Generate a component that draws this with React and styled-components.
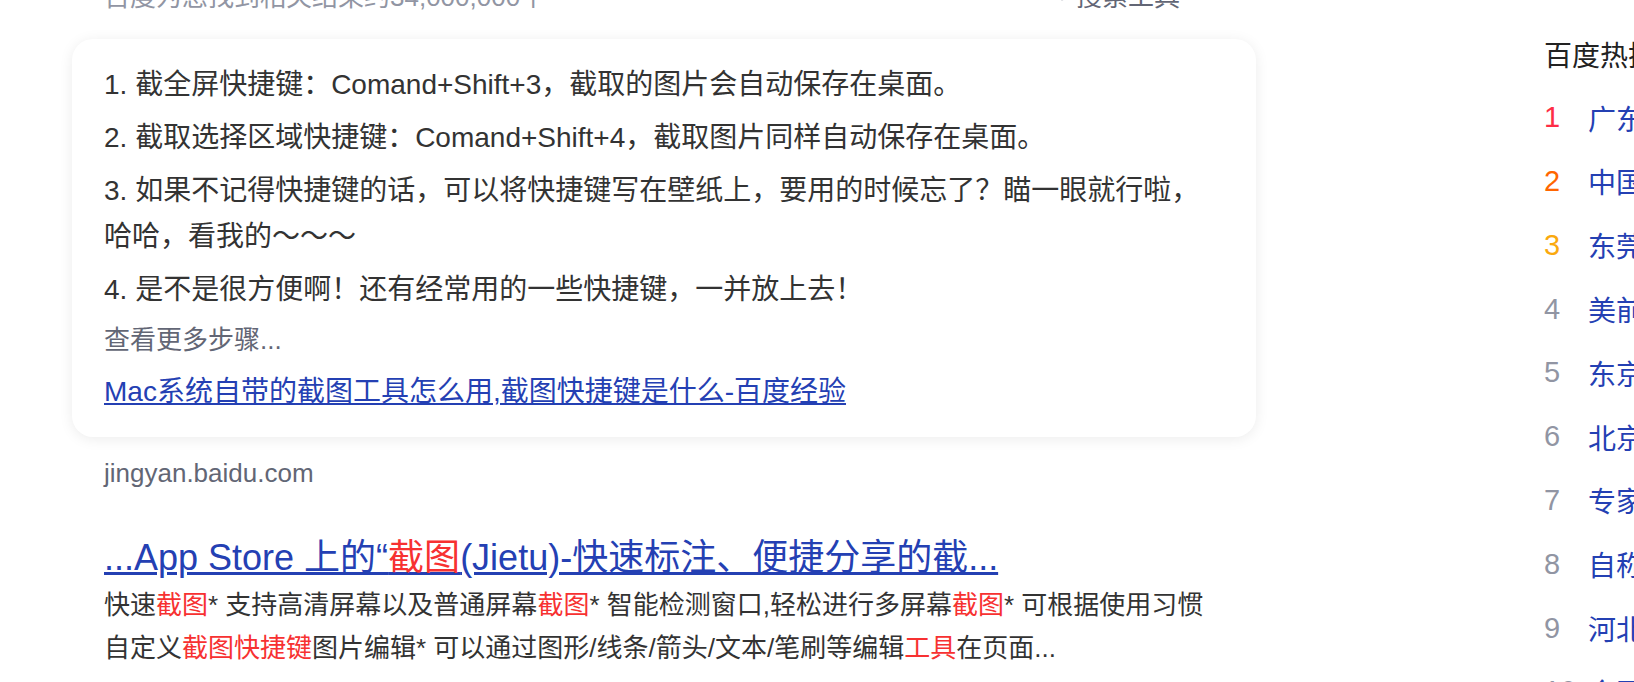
import React from 'react';
import styled, { createGlobalStyle } from 'styled-components';

const GlobalStyle = createGlobalStyle`
  html, body { margin: 0; padding: 0; background: #fff; overflow: hidden; }
  body { font-family: "Liberation Sans", "Noto Sans CJK SC", sans-serif; }
  * { box-sizing: border-box; }
`;

const Page = styled.div`
  display: flex;
  align-items: flex-start;
  width: 1634px;
  height: 682px;
  overflow: hidden;
  padding-left: 104px;
`;

const Main = styled.div`
  flex: none;
  width: 1120px;
  margin-top: -24px;
`;

const ResultMeta = styled.div`
  display: flex;
  justify-content: space-between;
  align-items: center;
  height: 36px;
  padding-right: 44px;
  font-size: 26px;
  color: #9195a3;
  white-space: nowrap;
`;

const Tools = styled.span`
  display: inline-flex;
  align-items: center;
  gap: 6px;
  color: #626675;
`;

const Card = styled.div`
  margin: 27px -32px 0;
  padding: 23px 32px 22px;
  background: #fff;
  border-radius: 21px;
  box-shadow: 0 2px 14px rgba(0, 0, 0, 0.08);
`;

const Step = styled.p`
  margin: 0 0 7px;
  font-size: 28px;
  line-height: 46px;
  color: #333;
`;

const More = styled.div`
  margin: 0 0 9px;
  font-size: 26px;
  line-height: 40px;
  color: #626675;
`;

const CardLink = styled.a`
  display: block;
  font-size: 28px;
  line-height: 46px;
  color: #2440b3;
  text-decoration: underline;
  cursor: pointer;
`;

const Source = styled.div`
  margin-top: 18px;
  font-size: 26px;
  line-height: 36px;
  color: #626675;
`;

const Title = styled.a`
  display: block;
  margin-top: 42px;
  font-size: 36px;
  line-height: 50px;
  color: #2440b3;
  text-decoration: underline;
  white-space: nowrap;
  cursor: pointer;
`;

const Hl = styled.em`
  font-style: normal;
  color: #f73131;
`;

const Abstract = styled.p`
  margin: 1px 0 0;
  font-size: 26px;
  line-height: 42.5px;
  color: #333;
`;

const Side = styled.aside`
  flex: none;
  width: 600px;
  margin-left: 320px;
  padding-top: 37px;
`;

const SideTitle = styled.div`
  font-size: 28px;
  line-height: 40px;
  color: #222;
  margin-bottom: 8.8px;
`;

const HotRow = styled.div`
  display: flex;
  align-items: center;
  height: 63.8px;
  white-space: nowrap;
`;

const rankColors = ['#fe2d46', '#ff6600', '#faa90e'];

const Rank = styled.span`
  flex: none;
  width: 44px;
  font-size: 29px;
  color: ${(p) => rankColors[p.$rank - 1] || '#9195a3'};
`;

const HotText = styled.a`
  font-size: 28px;
  color: #2440b3;
  cursor: pointer;
`;

const Funnel = () => (
  <svg width="14" height="16" viewBox="0 0 14 16" aria-hidden="true">
    <path d="M1 2h12l-4.5 6v5.5L5.5 15V8z" fill="#c4c7ce" />
  </svg>
);

const hot = [
  '广东发布最新天气预警',
  '中国航天再创新纪录',
  '东莞多地开展主题活动',
  '美前总统发表公开讲话',
  '东京街头出现新变化',
  '北京今年首场降雪',
  '专家解读最新政策',
  '自称网红男子被调查',
  '河北多地迎来降温',
  '全国报名人数公布',
];

export default function App() {
  return (
    <>
      <GlobalStyle />
      <Page>
        <Main>
          <ResultMeta>
            <span>百度为您找到相关结果约34,000,000个</span>
            <Tools>
              <Funnel />
              搜索工具
            </Tools>
          </ResultMeta>
          <Card>
            <Step>1. 截全屏快捷键：Comand+Shift+3，截取的图片会自动保存在桌面。</Step>
            <Step>2. 截取选择区域快捷键：Comand+Shift+4，截取图片同样自动保存在桌面。</Step>
            <Step>3. 如果不记得快捷键的话，可以将快捷键写在壁纸上，要用的时候忘了？瞄一眼就行啦，哈哈，看我的～～～</Step>
            <Step>4. 是不是很方便啊！还有经常用的一些快捷键，一并放上去！</Step>
            <More>查看更多步骤...</More>
            <CardLink>Mac系统自带的截图工具怎么用,截图快捷键是什么-百度经验</CardLink>
          </Card>
          <Source>jingyan.baidu.com</Source>
          <Title>
            ...App Store 上的“<Hl>截图</Hl>(Jietu)-快速标注、便捷分享的截...
          </Title>
          <Abstract>
            快速<Hl>截图</Hl>* 支持高清屏幕以及普通屏幕<Hl>截图</Hl>* 智能检测窗口,轻松进行多屏幕<Hl>截图</Hl>* 可根据使用习惯自定义<Hl>截图快捷键</Hl>图片编辑* 可以通过图形/线条/箭头/文本/笔刷等编辑<Hl>工具</Hl>在页面...
          </Abstract>
        </Main>
        <Side>
          <SideTitle>百度热搜</SideTitle>
          {hot.map((t, i) => (
            <HotRow key={t}>
              <Rank $rank={i + 1}>{i + 1}</Rank>
              <HotText>{t}</HotText>
            </HotRow>
          ))}
        </Side>
      </Page>
    </>
  );
}
